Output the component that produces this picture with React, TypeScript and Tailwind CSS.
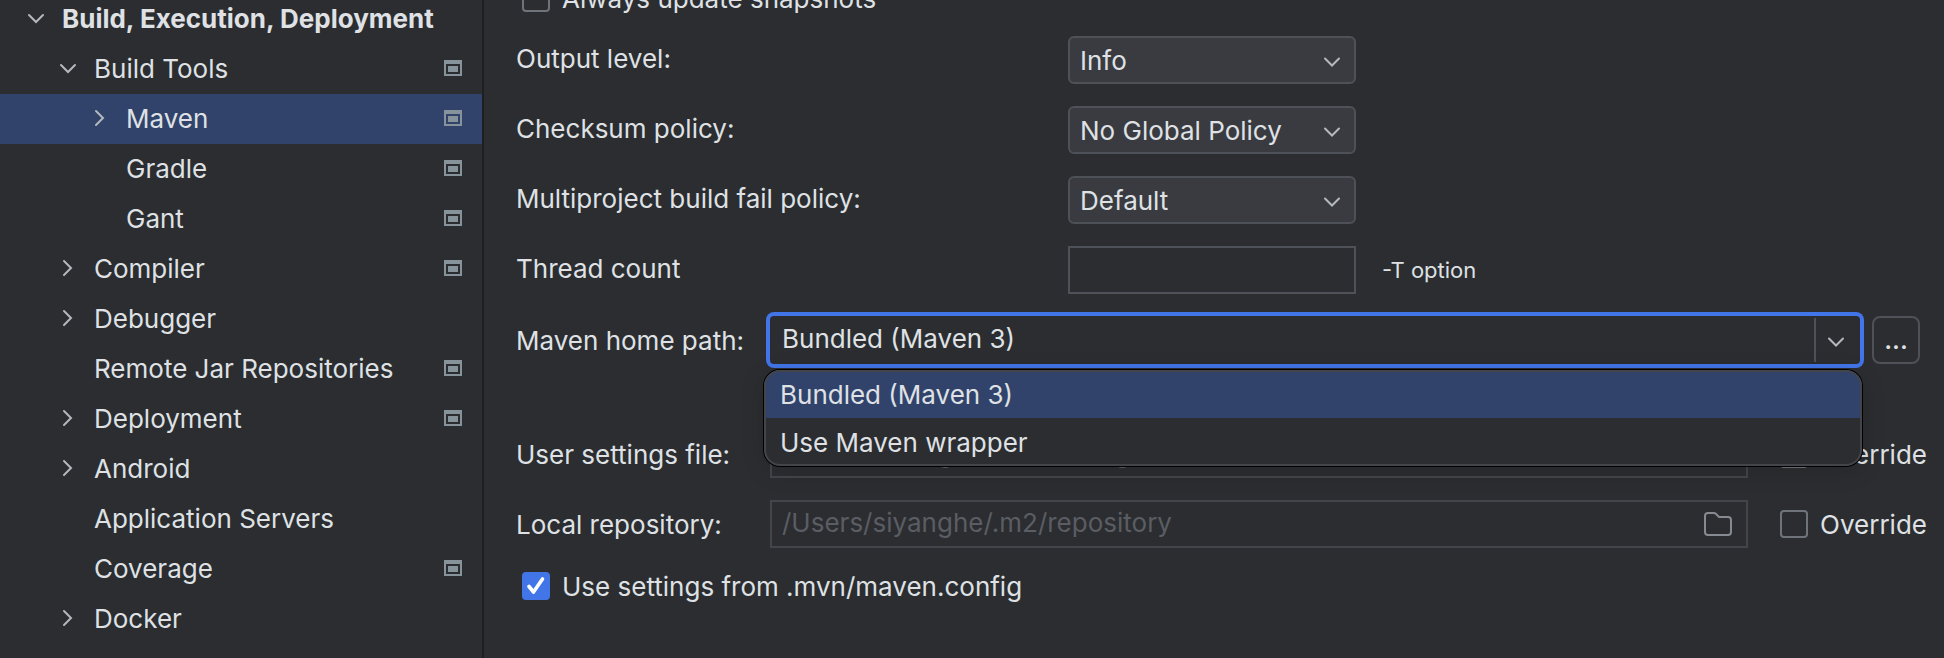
import React, { useState } from "react";

type TreeItem = {
  label: string;
  level: 0 | 1 | 2;
  state?: "open" | "closed";
  project?: boolean;
};

const items: TreeItem[] = [
  { label: "Build, Execution, Deployment", level: 0, state: "open" },
  { label: "Build Tools", level: 1, state: "open", project: true },
  { label: "Maven", level: 2, state: "closed", project: true },
  { label: "Gradle", level: 2, project: true },
  { label: "Gant", level: 2, project: true },
  { label: "Compiler", level: 1, state: "closed", project: true },
  { label: "Debugger", level: 1, state: "closed" },
  { label: "Remote Jar Repositories", level: 1, project: true },
  { label: "Deployment", level: 1, state: "closed", project: true },
  { label: "Android", level: 1, state: "closed" },
  { label: "Application Servers", level: 1 },
  { label: "Coverage", level: 1, project: true },
  { label: "Docker", level: 1, state: "closed" },
];

const indent = { 0: "pl-5", 1: "pl-[52px]", 2: "pl-[84px]" };

const paths = {
  open: "M9 12L16 19L23 12",
  closed: "M12 8L19 15L12 22",
  select: "M9 14.5L16 21.5L23 14.5",
};

function Chevron({ kind, className = "" }: { kind: keyof typeof paths; className?: string }) {
  return (
    <svg viewBox="0 0 32 32" aria-hidden="true" className={`size-8 shrink-0 ${className}`}>
      <path d={paths[kind]} fill="none" stroke="#b4b8bf" strokeWidth="2" strokeLinecap="round" />
    </svg>
  );
}

function ProjectIcon() {
  return (
    <svg viewBox="0 0 18 16" aria-hidden="true" className="mb-0.5 h-4 w-[18px] shrink-0">
      <path fillRule="evenodd" fill="#87939a" d="M0 0H18V16H0ZM2 4V14H16V4Z" />
      <rect x="4" y="6" width="10" height="6" fill="#87939a" />
    </svg>
  );
}

function SettingsTree() {
  const [selected, setSelected] = useState("Maven");
  return (
    <nav aria-label="Settings" className="w-[484px] shrink-0 border-r-2 border-[#1e1f22]">
      <ul className="-mt-1.5">
        {items.map((item) => (
          <li key={item.label}>
            <button
              type="button"
              onClick={() => setSelected(item.label)}
              className={`flex h-[50px] w-full items-center gap-2.5 pr-5 text-left ${indent[item.level]} ${
                item.level === 0 ? "font-bold" : ""
              } ${item.label === selected ? "bg-[#31436a]" : ""}`}
            >
              {item.state ? <Chevron kind={item.state} /> : <span className="w-8 shrink-0" />}
              <span className="grow whitespace-nowrap">{item.label}</span>
              {item.project && <ProjectIcon />}
            </button>
          </li>
        ))}
      </ul>
    </nav>
  );
}

function SelectRow({ id, label, options }: { id: string; label: string; options: string[] }) {
  return (
    <div className="flex h-12 items-center">
      <label htmlFor={id} className="w-[552px] shrink-0 pb-0.5">
        {label}
      </label>
      <div className="relative w-72">
        <select
          id={id}
          className="block h-12 w-full appearance-none rounded-md border-2 border-[#4e5157] bg-[#393b40] px-2.5 pt-0.5 outline-none"
        >
          {options.map((o) => (
            <option key={o}>{o}</option>
          ))}
        </select>
        <Chevron kind="select" className="pointer-events-none absolute top-2 right-2" />
      </div>
    </div>
  );
}

function Checkbox({ label, defaultChecked = false }: { label: string; defaultChecked?: boolean }) {
  return (
    <label className="flex h-8 items-center gap-3 whitespace-nowrap">
      <span className="grid size-7 shrink-0">
        <input
          type="checkbox"
          defaultChecked={defaultChecked}
          className="peer col-start-1 row-start-1 size-7 appearance-none rounded border-2 border-[#6f737a] checked:border-[#4175e8] checked:bg-[#4175e8]"
        />
        <svg
          viewBox="0 0 28 28"
          aria-hidden="true"
          className="pointer-events-none invisible col-start-1 row-start-1 size-7 peer-checked:visible"
        >
          <path
            d="M7 14.5L11.5 20L20.5 7"
            fill="none"
            stroke="#fff"
            strokeWidth="3.6"
            strokeLinecap="round"
            strokeLinejoin="round"
          />
        </svg>
      </span>
      <span className="pt-0.5">{label}</span>
    </label>
  );
}

function FolderIcon() {
  return (
    <svg viewBox="0 0 28 24" aria-hidden="true" className="h-6 w-7">
      <path
        d="M1 4Q1 1 4 1H10Q11 1 11.8 1.8L15 5H24Q27 5 27 8V20Q27 23 24 23H4Q1 23 1 20Z"
        fill="none"
        stroke="#868a91"
        strokeWidth="2"
      />
    </svg>
  );
}

function FileRow({ id, label, value }: { id: string; label: string; value: string }) {
  return (
    <div className="flex h-12 items-center">
      <label htmlFor={id} className="w-[254px] shrink-0 pt-0.5">
        {label}
      </label>
      <div className="flex h-12 grow items-center border-2 border-[#43454a] pr-3.5">
        <input
          id={id}
          disabled
          defaultValue={value}
          className="h-full min-w-0 grow bg-transparent px-2.5 pb-1 text-[#5a5d63]"
        />
        <button type="button" disabled aria-label="Browse">
          <FolderIcon />
        </button>
      </div>
      <div className="ml-8">
        <Checkbox label="Override" />
      </div>
    </div>
  );
}

function HomePathRow() {
  const [value, setValue] = useState("Bundled (Maven 3)");
  const options = ["Bundled (Maven 3)", "Use Maven wrapper"];
  return (
    <div className="flex h-12 items-center gap-3 pr-[7px]">
      <label htmlFor="home" className="w-[242px] shrink-0 pt-0.5 whitespace-nowrap">
        Maven home path:
      </label>
      <div className="relative flex h-12 grow items-center rounded-sm ring-4 ring-[#4175e8]">
        <input
          id="home"
          role="combobox"
          aria-expanded="true"
          aria-controls="home-list"
          value={value}
          onChange={(e) => setValue(e.target.value)}
          className="h-full min-w-0 grow bg-transparent px-3 pb-1 outline-none"
        />
        <button
          type="button"
          aria-label="Show options"
          className="flex h-11 w-[46px] items-center border-l-2 border-[#4e5157] pl-1"
        >
          <Chevron kind="select" />
        </button>
        <ul
          id="home-list"
          role="listbox"
          className="absolute top-[54px] -right-0.5 -left-1.5 z-10 overflow-hidden rounded-2xl bg-[#2b2d30] shadow-[0_0_0_1px_#000,0_4px_24px_rgba(0,0,0,0.15)] after:pointer-events-none after:absolute after:inset-0 after:rounded-2xl after:border-2 after:border-[#43454a]"
        >
          {options.map((o) => (
            <li
              key={o}
              role="option"
              aria-selected={o === value}
              onClick={() => setValue(o)}
              className={`flex h-12 items-center px-4 pt-0.5 ${o === value ? "bg-[#31436a]" : ""}`}
            >
              {o}
            </li>
          ))}
        </ul>
      </div>
      <button
        type="button"
        aria-label="Browse for Maven home"
        className="size-12 shrink-0 rounded-lg border-2 border-[#4e5157] text-center font-medium"
      >
        ...
      </button>
    </div>
  );
}

export default function App() {
  return (
    <div className="flex min-h-screen overflow-hidden bg-[#2b2d30] font-['Inter',sans-serif] text-[26px] leading-8 text-[#dfe1e5]">
      <SettingsTree />
      <main className="min-w-0 grow overflow-hidden pr-[17px] pl-8">
        <form className="-mt-[18px] flex flex-col gap-[22px]">
          <div className="pl-1.5">
            <Checkbox label="Always update snapshots" />
          </div>
          <SelectRow id="output" label="Output level:" options={["Info", "Debug", "Warn", "Error"]} />
          <SelectRow id="checksum" label="Checksum policy:" options={["No Global Policy", "Fail", "Warn"]} />
          <SelectRow id="fail" label="Multiproject build fail policy:" options={["Default", "Fast", "At End", "Never"]} />
          <div className="flex h-12 items-center">
            <label htmlFor="threads" className="w-[552px] shrink-0 pb-0.5">
              Thread count
            </label>
            <input
              id="threads"
              aria-describedby="threads-hint"
              className="h-12 w-72 border-2 border-[#4e5157] bg-transparent px-2.5 outline-none"
            />
            <span id="threads-hint" className="ml-[26px] text-[22px]">
              -T option
            </span>
          </div>
          <HomePathRow />
          <div className="mt-11">
            <FileRow id="user-settings" label="User settings file:" value="/Users/siyanghe/.m2/settings.xml" />
          </div>
          <FileRow id="repository" label="Local repository:" value="/Users/siyanghe/.m2/repository" />
          <div className="pl-1.5">
            <Checkbox label="Use settings from .mvn/maven.config" defaultChecked />
          </div>
        </form>
      </main>
    </div>
  );
}
